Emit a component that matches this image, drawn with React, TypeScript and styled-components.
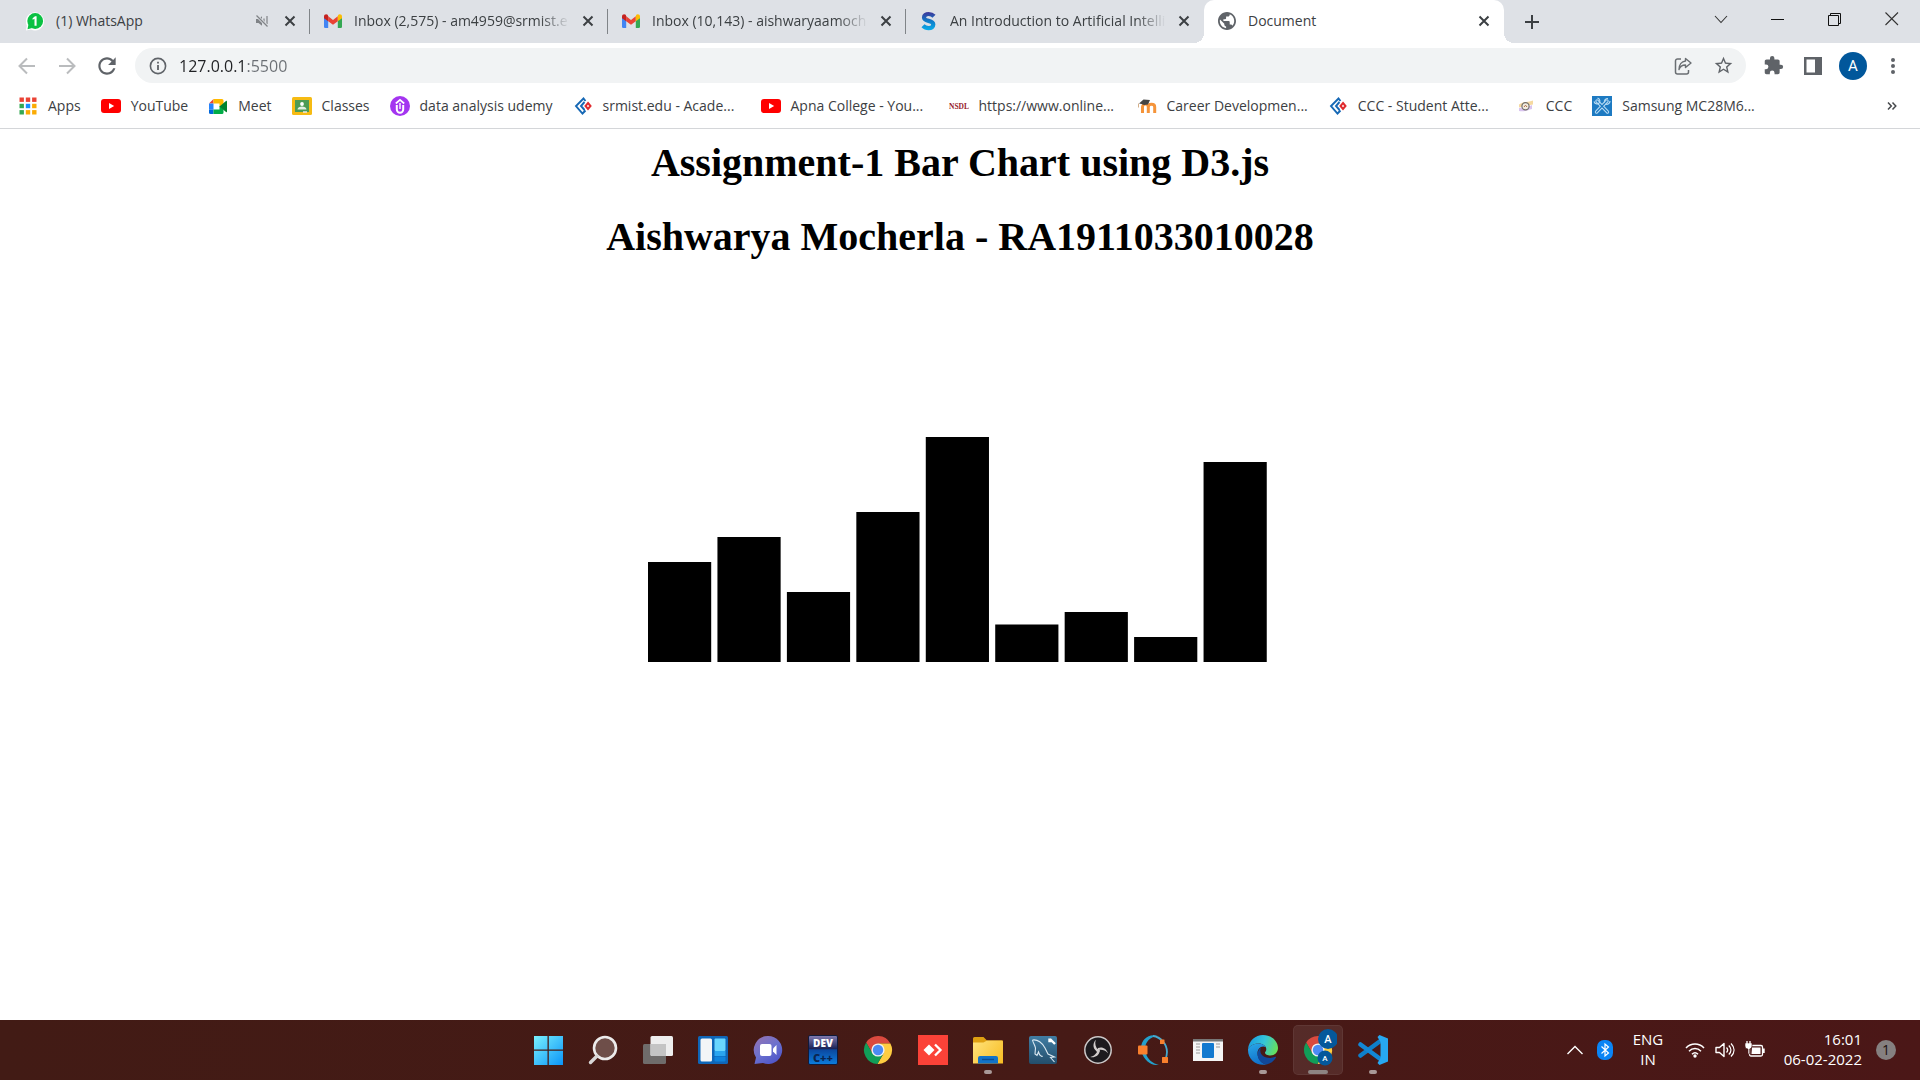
import React from "react";
import styled, { createGlobalStyle, css } from "styled-components";

const ui = `"Open Sans", "Noto Sans", sans-serif`;

const GlobalStyle = createGlobalStyle`
  *, *::before, *::after { box-sizing: border-box; }
  html, body { margin: 0; padding: 0; background: #fff; }
  button { border: 0; padding: 0; background: none; font: inherit; color: inherit; cursor: pointer; }
  a { color: inherit; text-decoration: none; }
  svg { display: block; flex: none; }
`;

const Screen = styled.div`
  display: flex;
  flex-direction: column;
  min-height: 100vh;
  font-family: ${ui};
  font-size: 14px;
  color: #3c4043;
`;

/* ---------- tab strip ---------- */
const TabStrip = styled.header`
  display: flex;
  align-items: stretch;
  height: 43px;
  padding-left: 12px;
  background: #dee1e6;
`;

const Tab = styled.div<{ $active?: boolean; $divider?: boolean }>`
  position: relative;
  display: flex;
  align-items: center;
  gap: 12px;
  flex: 0 1 ${(p) => (p.$active ? 300 : 298)}px;
  min-width: 0;
  padding: 0 14px 2px;
  ${(p) =>
    p.$divider &&
    css`
      &::after {
        content: "";
        position: absolute;
        right: 0;
        top: 9px;
        width: 1px;
        height: 25px;
        background: #808488;
      }
    `}
  ${(p) =>
    p.$active &&
    css`
      background: #fff;
      border-radius: 10px 10px 0 0;
      &::before,
      &::after {
        content: "";
        position: absolute;
        bottom: 0;
        width: 10px;
        height: 10px;
      }
      &::before {
        left: -10px;
        background: radial-gradient(circle at 0 0, transparent 10px, #fff 10px);
      }
      &::after {
        right: -10px;
        background: radial-gradient(circle at 100% 0, transparent 10px, #fff 10px);
      }
    `}
`;

const TabTitle = styled.span<{ $fade?: boolean }>`
  flex: 1;
  min-width: 0;
  overflow: hidden;
  white-space: nowrap;
  line-height: 20px;
  ${(p) =>
    p.$fade &&
    css`
      mask-image: linear-gradient(to right, #000 calc(100% - 30px), transparent);
    `}
`;

const MutedMark = styled.span`
  margin-right: 4px;
`;

const IconButton = styled.button<{ $w?: number; $h?: number }>`
  display: flex;
  flex: none;
  align-items: center;
  justify-content: center;
  width: ${(p) => p.$w ?? 12}px;
  height: ${(p) => p.$h ?? 20}px;
`;

const NewTab = styled(IconButton)`
  align-self: center;
  margin-left: 14px;
`;

const WindowControls = styled.div`
  display: flex;
  margin-left: auto;
`;

/* ---------- toolbar ---------- */
const Toolbar = styled.nav`
  display: flex;
  align-items: center;
  height: 45px;
  padding: 0 7px;
`;

const AddressBar = styled.form`
  display: flex;
  flex: 1;
  align-items: center;
  height: 35px;
  margin: 0 7px 0 8px;
  padding: 0 3px 0 14px;
  border-radius: 18px;
  background: #f1f3f4;
`;

const AddressInput = styled.input`
  flex: 1;
  min-width: 0;
  margin-left: 12px;
  padding: 0;
  border: 0;
  outline: 0;
  font: 16px/24px ${ui};
  color: transparent;
  background: linear-gradient(to right, #202124 68px, #6b6f74 68px);
  background-clip: text;
  -webkit-background-clip: text;
`;

const Avatar = styled.span`
  display: grid;
  place-items: center;
  width: 28px;
  height: 28px;
  border-radius: 50%;
  background: #01579b;
  color: #fff;
  font: 15px/20px Roboto, sans-serif;
`;

/* ---------- bookmarks ---------- */
const BookmarkBar = styled.nav`
  display: flex;
  align-items: center;
  gap: 20px;
  height: 41px;
  padding: 0 18px 4px;
  border-bottom: 1px solid #d4d6d9;
`;

const Bookmark = styled.a<{ $long?: boolean }>`
  display: flex;
  align-items: center;
  gap: 10px;
  min-width: ${(p) => (p.$long ? 168 : 0)}px;
  line-height: 20px;
  white-space: nowrap;
`;

const Overflow = styled(IconButton)`
  margin-left: auto;
`;

/* ---------- page ---------- */
const Page = styled.main`
  flex: 1;
  padding: 10px;
  text-align: center;
  color: #000;
`;

const Heading = styled.h1`
  margin: 0 0 26px;
  font: bold 40px/48px "Liberation Serif", "Times New Roman", serif;
`;

const Chart = styled.svg`
  margin: 0 auto;
`;

/* ---------- taskbar ---------- */
const Taskbar = styled.footer`
  display: grid;
  grid-template-columns: 1fr auto 1fr;
  align-items: center;
  height: 60px;
  background: linear-gradient(to right, #421b15, #461a16 55%, #4b1717);
  color: #fff;
`;

const Apps = styled.div`
  display: flex;
  grid-column: 2;
  gap: 5px;
`;

const AppButton = styled.button<{ $state?: "open" | "active" }>`
  position: relative;
  display: grid;
  place-items: center;
  width: 50px;
  height: 50px;
  border-radius: 5px;
  ${(p) =>
    p.$state === "active" &&
    css`
      background: rgba(255, 255, 255, 0.08);
      box-shadow: inset 0 0 0 1px rgba(255, 255, 255, 0.06);
    `}
  ${(p) =>
    p.$state &&
    css`
      &::after {
        content: "";
        position: absolute;
        left: 50%;
        bottom: 1px;
        width: ${p.$state === "active" ? 20 : 8}px;
        height: 4px;
        border-radius: 2px;
        background: ${p.$state === "active" ? "#8d8482" : "#a99998"};
        transform: translateX(-50%);
      }
    `}
`;

const Tray = styled.div`
  display: flex;
  align-items: center;
  justify-content: flex-end;
  padding-right: 24px;
`;

const TrayText = styled.button`
  padding: 0 12px 2px;
  font-size: 15px;
  line-height: 20px;
  text-align: center;
`;

const Language = styled(TrayText)`
  width: 56px;
`;

const Clock = styled(TrayText)`
  width: 108px;
  padding-right: 14px;
  text-align: right;
  white-space: nowrap;
`;

const QuickSettings = styled.button`
  display: flex;
  align-items: center;
  gap: 10px;
  padding: 0 3px 0 9px;
`;

const Count = styled.button`
  width: 20px;
  height: 20px;
  border-radius: 50%;
  background: #858080;
  color: #1c1010;
  font-size: 14px;
  line-height: 20px;
`;

/* ---------- drawings ---------- */
type BoxProps = { s?: number; w?: number; h?: number; vb?: string; children: React.ReactNode };
const Svg = ({ s = 20, w, h, vb = "0 0 24 24", children }: BoxProps) => (
  <svg width={w ?? s} height={h ?? s} viewBox={vb} fill="none" aria-hidden="true">
    {children}
  </svg>
);

const CloseIcon = () => (
  <Svg s={12} vb="0 0 12 12">
    <path d="M1.5 1.5l9 9M10.5 1.5l-9 9" stroke="#3c4043" strokeWidth="2" />
  </Svg>
);

const WhatsAppIcon = () => (
  <Svg w={18} h={20} vb="1 0 18 20">
    <path d="M1 19.5l.8-5A9.1 9.1 0 1 1 6 18.6z" fill="#fff" />
    <circle cx="10.2" cy="10" r="7.900" fill="#0ac143" />
    <path d="M2.500 18.300l1-5 3.800 3.700z" fill="#0ac143" />
    <path d="M7.600 7.200l2.400-2h1.600v9.600H9.500V7.700l-1.900 1z" fill="#fff" />
  </Svg>
);

const GmailIcon = () => (
  <Svg w={18} h={20} vb="0 0 18 20">
    <path d="M0 5.500l4.200 3V17H1.300A1.300 1.300 0 0 1 0 15.700z" fill="#4285f4" />
    <path d="M18 5.500l-4.200 3V17h2.900a1.300 1.300 0 0 0 1.300-1.300z" fill="#34a853" />
    <path d="M4.200 5.200L9 8.900l4.800-3.700v5L9 13.800l-4.800-3.600z" fill="#ea4335" />
    <path d="M0 5.500C0 3.200 2.300 2.600 3.700 3.700l.5 1.500v5L0 7.200z" fill="#c5221f" />
    <path d="M18 5.500c0-2.300-2.300-2.900-3.700-1.800l-.5 1.500v5l4.200-3z" fill="#fbbc04" />
  </Svg>
);

const SIcon = () => (
  <Svg w={18} h={20} vb="0 0 18 20">
    <defs>
      <linearGradient id="sg" x1="0" y1="0" x2="0" y2="20" gradientUnits="userSpaceOnUse">
        <stop offset="0.1" stopColor="#3b3c9d" />
        <stop offset="0.5" stopColor="#0f7cc9" />
        <stop offset="1" stopColor="#08b0ec" />
      </linearGradient>
    </defs>
    <path
      d="M14 5.200C12.600 3.700 10.500 3 8.600 3 5.900 3 4 4.400 4 6.400c0 4.700 9.300 2.300 9.300 7.200 0 2.200-1.900 3.600-4.700 3.600-2.200 0-4.100-.8-5.600-2.400"
      stroke="url(#sg)"
      strokeWidth="4.200"
    />
  </Svg>
);

const GlobeIcon = () => (
  <Svg s={18} vb="2 2 20 20">
    <path
      fill="#5f6368"
      d="M12 2C6.480 2 2 6.480 2 12s4.480 10 10 10 10-4.480 10-10S17.520 2 12 2zm-1 17.930c-3.950-.49-7-3.850-7-7.930 0-.62.080-1.210.210-1.790L9 15v1c0 1.100.9 2 2 2v1.930zm6.900-2.540c-.26-.81-1-1.390-1.900-1.390h-1v-3c0-.55-.45-1-1-1H8v-2h2c.55 0 1-.45 1-1V7h2c1.100 0 2-.9 2-2v-.41c2.930 1.190 5 4.060 5 7.410 0 2.080-.8 3.970-2.100 5.390z"
    />
  </Svg>
);

const MuteIcon = () => (
  <Svg s={12} vb="0 0 12 12">
    <path d="M0 4h2.500L6 1.200v9.600L2.500 8H0z" fill="#808387" />
    <path d="M8 3.500v5M11 1v8" stroke="#808387" strokeWidth="1.200" />
    <path d="M0 0l12 12" stroke="#dee1e6" strokeWidth="3" />
    <path d="M0.500 0.500l11 11" stroke="#808387" strokeWidth="1.200" />
  </Svg>
);

const YouTubeIcon = () => (
  <Svg vb="0 0 20 20">
    <rect y="3" width="20" height="14" rx="3" fill="#f00" />
    <path d="M8 7v6l5.200-3z" fill="#fff" />
  </Svg>
);

const AppsIcon = () => (
  <Svg vb="0 0 20 20">
    {["#ea4335", "#ea4335", "#ea4335", "#34a853", "#1a90ff", "#fbab04", "#34a853", "#fbab04", "#fbab04"].map((c, i) => (
      <rect key={i} x={1.5 + (i % 3) * 6.3} y={1.5 + Math.floor(i / 3) * 6.3} width="4.400" height="4.400" fill={c} />
    ))}
  </Svg>
);

const MeetIcon = () => (
  <Svg vb="0 0 20 20">
    <path d="M5.500 3v4.500H1z" fill="#ea4335" />
    <path d="M1 7.500h4.500v6H1z" fill="#2684fc" />
    <path d="M1 13.500h4.500V18H2.500A1.500 1.500 0 0 1 1 16.500z" fill="#0066da" />
    <path d="M5.500 3H14a1.500 1.500 0 0 1 1.500 1.500V8l-4 3V7.500h-6z" fill="#ffba00" />
    <path d="M5.500 13.500h6V10l4 3v3.500A1.500 1.500 0 0 1 14 18H5.500z" fill="#00ac47" />
    <path d="M11.500 10.500L18 5c.5-.4 1-.1 1 .5v10c0 .6-.5.900-1 .5z" fill="#00832d" />
  </Svg>
);

const ClassesIcon = () => (
  <Svg vb="0 0 20 20">
    <rect y="1" width="20" height="18" rx="1.500" fill="#f6bb13" />
    <rect x="3" y="4" width="14" height="12" fill="#4d9b55" />
    <circle cx="10" cy="8" r="1.900" fill="#fff" />
    <path d="M5.500 13.500c0-2 2.300-3 4.500-3s4.500 1 4.500 3z" fill="#e3f0e4" />
    <path d="M11 16h4" stroke="#e8e8e8" strokeWidth="1.500" />
  </Svg>
);

const UdemyIcon = () => (
  <Svg vb="0 0 20 20">
    <circle cx="10" cy="10" r="10" fill="#a435f0" />
    <path d="M5.800 7.500L10 3.800l4.200 3.700" stroke="#fff" strokeWidth="1.700" />
    <path d="M6.800 9v4.500a3.200 3.200 0 0 0 6.400 0V9" stroke="#fff" strokeWidth="2" />
    <path d="M10 7v6" stroke="#fff" strokeWidth="1.400" />
  </Svg>
);

const CodeIcon = () => (
  <Svg vb="0 0 20 20">
    <path d="M12.500 5L10.500 2.500 3 10l6.500 7.500 3-3M11.500 6L8 10l3.500 4" stroke="#1668b5" strokeWidth="1.900" />
    <path d="M15 7l2.500 3-2.500 3-2.500-3z" stroke="#e02b2f" strokeWidth="2" />
  </Svg>
);

const NsdlIcon = () => (
  <Svg vb="0 0 20 20">
    <text x="10" y="13" textAnchor="middle" fontFamily="Liberation Serif, serif" fontWeight="bold" fontSize="7.500" fill="#97212c">
      NSDL
    </text>
  </Svg>
);

const MoodleIcon = () => (
  <Svg vb="0 0 20 20">
    <path d="M5.500 17v-6a2.800 2.800 0 0 1 5.800 0v6M11.300 17v-6c0-3.600 6.400-3.600 6.400 0v6" stroke="#f5943a" strokeWidth="3" />
    <path d="M2 7.500L6.500 3.500l6.500.5-2 4.500-4 .5-2.500-1z" fill="#454545" />
    <path d="M1.500 7.500v4" stroke="#c99a6b" strokeWidth="0.800" />
  </Svg>
);

const RibbonIcon = () => (
  <Svg vb="0 0 20 20">
    <path d="M3 8.500c4-3 8-2 14-4v4c-5 1-9 1-14 3z" fill="#f6d9a0" />
    <path d="M3 12c4-1 8 0 13-3v4c-4 1-8 3-13 2z" fill="#d9c4ef" />
    <circle cx="9.500" cy="10.300" r="3.600" fill="#f3eee0" stroke="#74706b" strokeWidth="1.200" />
    <path d="M8 11l1.500-1.800L11 11" stroke="#b26d4a" strokeWidth="1" />
  </Svg>
);

const ToolsIcon = () => (
  <Svg vb="0 0 20 20">
    <rect width="20" height="20" fill="#1d7ac2" />
    <path d="M5 5l10.500 11M15 5L4.500 16" stroke="#b8dcf4" strokeWidth="3.400" strokeLinecap="round" />
    <path d="M5 5l10.500 11M15 5L4.500 16" stroke="#1d7ac2" strokeWidth="1.300" strokeLinecap="round" />
    <path d="M2 5.500c1 3 4.500 3 5 1.500M5.500 2c2.500 1 3 3.500 1.500 5M12.500 6.500c-.5-2 1-4 3.500-4M18 5c0 2.500-2.500 4-4.500 3" stroke="#b8dcf4" strokeWidth="1.200" />
  </Svg>
);

/* taskbar drawings share a 30 unit box */
const T = ({ children }: { children: React.ReactNode }) => (
  <Svg s={30} vb="0 0 30 30">
    {children}
  </Svg>
);

const StartIcon = () => (
  <T>
    <defs>
      <linearGradient id="win" x1="0" y1="0" x2="30" y2="30" gradientUnits="userSpaceOnUse">
        <stop stopColor="#7df4fe" />
        <stop offset="1" stopColor="#0a94f8" />
      </linearGradient>
    </defs>
    <path d="M1 1h13.500v13.500H1zM15.800 1H30v13.500H15.800zM1 15.800h13.500V30H1zM15.800 15.800H30V30H15.800z" fill="url(#win)" />
  </T>
);

const SearchIcon = () => (
  <T>
    <circle cx="17" cy="13" r="11" fill="#6e4e49" stroke="#ecebeb" strokeWidth="2.600" />
    <path d="M9 21l-6.500 6.500" stroke="#d8d6d6" strokeWidth="3.400" strokeLinecap="round" />
  </T>
);

const TaskViewIcon = () => (
  <T>
    <rect y="9" width="23" height="20" rx="1.500" fill="#6f6c6b" />
    <rect x="7.500" y="1" width="22.500" height="20" rx="1.500" fill="#eee" />
    <path d="M7.500 9H23v12H9a1.500 1.500 0 0 1-1.500-1.500z" fill="#c4c4c4" />
  </T>
);

const WidgetsIcon = () => (
  <T>
    <rect y="1" width="30" height="28" rx="1.500" fill="#0f66b8" />
    <rect x="2.500" y="3.500" width="11.500" height="23" rx="1.500" fill="#f3f5f7" />
    <rect x="16.500" y="3.500" width="11" height="12.500" rx="1" fill="#69d6ff" />
    <rect x="16.500" y="16" width="11" height="5" fill="#2aa5f0" />
    <rect x="16.500" y="21.500" width="11" height="5" rx="1" fill="#0f83dd" />
  </T>
);

const ChatIcon = () => (
  <T>
    <defs>
      <linearGradient id="chat" x1="6" y1="4" x2="22" y2="28" gradientUnits="userSpaceOnUse">
        <stop stopColor="#8b72b8" />
        <stop offset="0.5" stopColor="#6a70cf" />
        <stop offset="1" stopColor="#4f55c8" />
      </linearGradient>
    </defs>
    <path d="M15 1a14 14 0 1 1-5 27l-8.500 1 1.500-6.500A14 14 0 0 1 15 1z" fill="url(#chat)" />
    <rect x="7" y="9" width="11.500" height="12" rx="2" fill="#fff" />
    <path d="M20 13.500l3.500-3.500v10L20 16.500z" fill="#fff" />
  </T>
);

const DevIcon = () => (
  <T>
    <defs>
      <linearGradient id="dev" x1="0" y1="0" x2="0" y2="30" gradientUnits="userSpaceOnUse">
        <stop stopColor="#8780b5" />
        <stop offset="0.450" stopColor="#1c2458" />
        <stop offset="0.500" stopColor="#0b49a0" />
        <stop offset="1" stopColor="#0c7fe0" />
      </linearGradient>
    </defs>
    <rect x="0.500" y="0.500" width="29" height="29" rx="1.500" fill="url(#dev)" stroke="#101a3a" />
    <text x="15" y="12" textAnchor="middle" fontFamily="Open Sans, sans-serif" fontWeight="800" fontSize="10" fill="#fff">
      DEV
    </text>
    <text x="15" y="27" textAnchor="middle" fontFamily="Open Sans, sans-serif" fontWeight="800" fontSize="11" fill="#0a2550">
      C++
    </text>
  </T>
);

const ChromeArt = () => (
  <>
    <path d="M3.170 7.510A14 14 0 0 1 27.400 8.500H15L9.370 18.250z" fill="#db4a3f" />
    <path d="M27.400 8.500A14 14 0 0 1 14.430 29l6.200-10.750L15 8.500z" fill="#ffcd41" />
    <path d="M14.430 29A14 14 0 0 1 3.170 7.510l6.200 10.740h11.260z" fill="#119d58" />
    <circle cx="15" cy="15" r="6.600" fill="#f1f1f1" />
    <circle cx="15" cy="15" r="5.200" fill="#4b8bf5" />
  </>
);

const ChromeIcon = () => (
  <T>
    <ChromeArt />
  </T>
);

const AnyDeskIcon = () => (
  <T>
    <rect width="30" height="30" fill="#fb4238" />
    <path d="M5.500 15l5.500-5.500 5.500 5.500-5.500 5.500z" fill="#fff" />
    <path d="M14.500 10l5 5-5 5M18.500 10l5 5-5 5" stroke="#fb4238" strokeWidth="1.500" />
    <path d="M17 9.500l5.500 5.500-5.500 5.500" stroke="#fff" strokeWidth="2.300" />
  </T>
);

const FolderIcon = () => (
  <T>
    <defs>
      <linearGradient id="fold" x1="0" y1="6" x2="30" y2="28" gradientUnits="userSpaceOnUse">
        <stop stopColor="#ffe37c" />
        <stop offset="1" stopColor="#f8bd23" />
      </linearGradient>
    </defs>
    <path d="M0 3.500A1.500 1.500 0 0 1 1.500 2h9L14 5.500H30V14H0z" fill="#dfa012" />
    <path d="M0 7.500h10.500L14 5.500h14.500A1.500 1.500 0 0 1 30 7v21.500H0z" fill="url(#fold)" />
    <path d="M5 28.500V23a2 2 0 0 1 2-2h16a2 2 0 0 1 2 2v5.500z" fill="#1273c8" />
    <path d="M9 24.500h12" stroke="#0b4d93" strokeWidth="1.400" />
  </T>
);

const MySqlIcon = () => (
  <T>
    <defs>
      <linearGradient id="sql" x1="0" y1="0" x2="0" y2="30" gradientUnits="userSpaceOnUse">
        <stop stopColor="#427fa6" />
        <stop offset="1" stopColor="#224c69" />
      </linearGradient>
    </defs>
    <rect x="1" y="1" width="28" height="28" rx="2" fill="url(#sql)" />
    <path
      d="M4.500 5c5-1 10 3 12.500 8l3 6 6.500 3-4 .5 4 4.500M4.500 5c.5 3 2.500 5 3 8l-.5 6 2 1.500 1.500-3.500c1 3.500 3 5 4 4"
      stroke="#dbe9f2"
      strokeWidth="1.100"
    />
    <path d="M22 4l5 5M21.500 3.500v2.500h2.500" stroke="#fff" strokeWidth="2.400" />
  </T>
);

const ObsIcon = () => (
  <T>
    <circle cx="15" cy="15" r="13.200" fill="#1c1a1e" stroke="#ccc8c8" strokeWidth="1.500" />
    {[0, 120, 240].map((a) => (
      <path key={a} transform={`rotate(${a} 15 15)`} d="M15.500 15.500C12.500 12 11.500 9 12.800 4.800c-3 3.200-3.300 8.200.500 11.200z" fill="#d0cccc" />
    ))}
    <circle cx="15" cy="15.500" r="1.800" fill="#d0cccc" />
  </T>
);

const OctaveIcon = () => (
  <T>
    <path
      d="M20 1C10-2.500 1 6 3.500 16.500 6 26 14 31.500 21 29.500c-6-.5-11.500-5-13.500-12C5.500 9 11 1.500 20 1z"
      fill="#24a0cc"
    />
    <path d="M15 1c8 1 14 8.500 14 16 0 3-.7 5.500-2 8" stroke="#45a9cf" strokeWidth="1.800" />
    <rect y="10.500" width="9.500" height="9" rx="1" fill="#f9802d" />
    <rect x="22" y="4.500" width="4.500" height="4.500" rx="0.500" fill="#f9802d" />
    <rect x="24" y="22" width="6" height="6" rx="0.500" fill="#f9802d" />
  </T>
);

const WindowIcon = () => (
  <T>
    <rect y="4" width="30" height="22" fill="#f5f5f5" />
    <rect y="4" width="30" height="2.500" fill="#777" />
    <rect x="9" y="8" width="12" height="15" rx="1" fill="#1379cf" />
    <path d="M3 9h4M3 12h4M3 15h4M3 18h4M23 9h4M23 12h4" stroke="#9a9a9a" strokeWidth="1" />
  </T>
);

const EdgeIcon = () => (
  <T>
    <defs>
      <linearGradient id="e1" x1="2" y1="4" x2="29" y2="14" gradientUnits="userSpaceOnUse">
        <stop stopColor="#1ba0e2" />
        <stop offset="0.500" stopColor="#35c5d8" />
        <stop offset="1" stopColor="#67e05a" />
      </linearGradient>
      <linearGradient id="e2" x1="2" y1="8" x2="10" y2="30" gradientUnits="userSpaceOnUse">
        <stop stopColor="#2aa7e8" />
        <stop offset="1" stopColor="#0f6fc9" />
      </linearGradient>
    </defs>
    <path d="M0 14C1 5.500 7.500 0 15 0c9 0 15 6.500 15 13 0 4.500-3.500 7.500-7.500 7.500-3 0-5.500-1.300-5.500-2.700 0-.9 1.300-1.600 1.300-3.500C18.300 11 15 8.500 10.500 8.500 5.500 8.500 1.500 11 0 14z" fill="url(#e1)" />
    <path d="M0 14c1.500-3 5.500-5.500 10.500-5.500 3.500 0 6 1.500 7.200 3.500C13 10 9.500 14 9.500 18c0 6 4.500 11 9 11.500C9 31.500 0 25 0 15z" fill="url(#e2)" />
    <path d="M13 12.800c-2 1.500-3.500 3.700-3.500 6.200 0 5 4 10 9 10.500 4-.8 7.500-3.500 9.500-7 .3-.6-.2-1-.8-.7-5.500 2.700-14.500.7-14.900-5.800-.1-1.200.200-2.300.7-3.200z" fill="#11489a" />
  </T>
);

const ChromeProfileIcon = () => (
  <Svg w={38} h={42} vb="0 0 38 42">
    <g transform="translate(4 6)">
      <ChromeArt />
    </g>
    <circle cx="29" cy="10" r="10" fill="#04589b" />
    <circle cx="26" cy="29" r="7.500" fill="#04589b" />
    <text x="29" y="14" textAnchor="middle" fontFamily="Roboto, sans-serif" fontSize="11" fontWeight="500" fill="#fff">
      A
    </text>
    <text x="26" y="32" textAnchor="middle" fontFamily="Roboto, sans-serif" fontSize="8" fontWeight="500" fill="#fff">
      A
    </text>
  </Svg>
);

const VsCodeIcon = () => (
  <T>
    <path d="M23 5.500L2.500 20.500" stroke="#0f7fc9" strokeWidth="4.500" strokeLinecap="round" />
    <path d="M23 24.500L2.500 9.500" stroke="#1287d6" strokeWidth="4.500" strokeLinecap="round" />
    <path d="M21.500 0L30 3.500v23L21.500 30l-2-2 3-5V7l-3-5z" fill="#27a8f2" />
  </T>
);

const WifiIcon = () => (
  <Svg vb="0 0 20 20">
    <path d="M1 8c5-5.300 13-5.300 18 0M4 11.200c3.500-3.600 8.500-3.600 12 0M7 14.200c2-2 4-2 6 0" stroke="#fff" strokeWidth="1.500" />
    <circle cx="10" cy="16" r="1.700" fill="#fff" />
  </Svg>
);

const VolumeIcon = () => (
  <Svg vb="0 0 20 20">
    <path d="M1 7.500h3.500L9 3.500v13l-4.500-4H1z" stroke="#fff" strokeWidth="1.400" strokeLinejoin="round" />
    <path d="M11.500 7.500c1.500 1.600 1.500 3.400 0 5M13.800 5.500c2.800 2.800 2.800 6.200 0 9M16 3.500c4 4 4 9 0 13" stroke="#fff" strokeWidth="1.300" />
  </Svg>
);

const BatteryIcon = () => (
  <Svg vb="0 0 20 20">
    <rect x="4.500" y="5.500" width="13" height="10.500" rx="1.500" stroke="#fff" strokeWidth="1.300" />
    <path d="M7 7.500h8.500V14H6.500z" fill="#fff" />
    <path d="M18.800 8.500v4.500" stroke="#fff" strokeWidth="1.800" />
    <path d="M0 3h7v3a3 3 0 0 1-2.500 3v5H3V9A3 3 0 0 1 0 6z" fill="#fff" stroke="#491818" strokeWidth="0.600" />
    <path d="M2 1v3M5 1v3" stroke="#fff" strokeWidth="1.300" />
  </Svg>
);

const BluetoothIcon = () => (
  <Svg w={16} h={20} vb="0 0 16 20">
    <rect width="16" height="20" rx="7" fill="#0a84f5" />
    <path d="M4.500 6.500l7 6.500L8 16V4l3.500 3-7 6.500" stroke="#fff" strokeWidth="1.200" />
  </Svg>
);

/* ---------- data ---------- */
const tabs = [
  { title: "(1) WhatsApp", icon: <WhatsAppIcon />, muted: true, divider: true },
  { title: "Inbox (2,575) - am4959@srmist.e", icon: <GmailIcon />, fade: true, divider: true },
  { title: "Inbox (10,143) - aishwaryaamoch", icon: <GmailIcon />, fade: true, divider: true },
  { title: "An Introduction to Artificial Intelli", icon: <SIcon />, fade: true },
  { title: "Document", icon: <GlobeIcon />, active: true },
];

const bookmarks = [
  { label: "Apps", icon: <AppsIcon /> },
  { label: "YouTube", icon: <YouTubeIcon /> },
  { label: "Meet", icon: <MeetIcon /> },
  { label: "Classes", icon: <ClassesIcon /> },
  { label: "data analysis udemy", icon: <UdemyIcon /> },
  { label: "srmist.edu - Acade...", icon: <CodeIcon />, long: true },
  { label: "Apna College - You...", icon: <YouTubeIcon />, long: true },
  { label: "https://www.online...", icon: <NsdlIcon />, long: true },
  { label: "Career Developmen...", icon: <MoodleIcon />, long: true },
  { label: "CCC - Student Atte...", icon: <CodeIcon />, long: true },
  { label: "CCC", icon: <RibbonIcon /> },
  { label: "Samsung MC28M6...", icon: <ToolsIcon />, long: true },
];

const taskApps: { name: string; icon: React.ReactNode; state?: "open" | "active" }[] = [
  { name: "Start", icon: <StartIcon /> },
  { name: "Search", icon: <SearchIcon /> },
  { name: "Task View", icon: <TaskViewIcon /> },
  { name: "Widgets", icon: <WidgetsIcon /> },
  { name: "Chat", icon: <ChatIcon /> },
  { name: "Dev-C++", icon: <DevIcon /> },
  { name: "Chrome", icon: <ChromeIcon /> },
  { name: "AnyDesk", icon: <AnyDeskIcon /> },
  { name: "File Explorer", icon: <FolderIcon />, state: "open" },
  { name: "MySQL Workbench", icon: <MySqlIcon /> },
  { name: "OBS Studio", icon: <ObsIcon /> },
  { name: "Octave", icon: <OctaveIcon /> },
  { name: "Window", icon: <WindowIcon /> },
  { name: "Edge", icon: <EdgeIcon />, state: "open" },
  { name: "Chrome profile", icon: <ChromeProfileIcon />, state: "active" },
  { name: "Visual Studio Code", icon: <VsCodeIcon />, state: "open" },
];

const dataset = [80, 100, 56, 120, 180, 30, 40, 20, 160];
const chartWidth = 500;
const chartHeight = 300;
const barPadding = 5;
const barWidth = chartWidth / dataset.length;

export default function App() {
  return (
    <Screen>
      <GlobalStyle />
      <TabStrip>
        {tabs.map((t) => (
          <Tab key={t.title} $active={t.active} $divider={t.divider}>
            {t.icon}
            <TabTitle $fade={t.fade}>{t.title}</TabTitle>
            {t.muted && (
              <MutedMark>
                <MuteIcon />
              </MutedMark>
            )}
            <IconButton aria-label="Close tab">
              <CloseIcon />
            </IconButton>
          </Tab>
        ))}
        <NewTab $w={28} $h={28} aria-label="New tab">
          <Svg s={16} vb="0 0 16 16">
            <path d="M8 1v14M1 8h14" stroke="#3c4043" strokeWidth="2" />
          </Svg>
        </NewTab>
        <WindowControls>
          <IconButton $w={57} $h={37} aria-label="Search tabs">
            <Svg s={14} vb="0 0 14 14">
              <path d="M1 4l6 6.500L13 4" stroke="#333" strokeWidth="1.100" />
            </Svg>
          </IconButton>
          <IconButton $w={57} $h={37} aria-label="Minimize">
            <Svg s={14} vb="0 0 14 14">
              <path d="M0 7.500h13" stroke="#111" />
            </Svg>
          </IconButton>
          <IconButton $w={57} $h={37} aria-label="Restore">
            <Svg s={14} vb="0 0 14 14">
              <path d="M0.500 3.500h10v10h-10zM2.500 3.500v-2h10v10h-2" stroke="#111" />
            </Svg>
          </IconButton>
          <IconButton $w={57} $h={37} aria-label="Close">
            <Svg s={14} vb="0 0 14 14">
              <path d="M0.500 0.500l12.500 12.500M13 0.500L0.500 13" stroke="#333" strokeWidth="1.100" />
            </Svg>
          </IconButton>
        </WindowControls>
      </TabStrip>

      <Toolbar>
        <IconButton $w={40} $h={40} aria-label="Back">
          <Svg s={18} vb="0 0 18 18">
            <path d="M17 9H2M9 1.500L1.500 9 9 16.500" stroke="#babcbe" strokeWidth="2" />
          </Svg>
        </IconButton>
        <IconButton $w={40} $h={40} aria-label="Forward">
          <Svg s={18} vb="0 0 18 18">
            <path d="M1 9h15M9 1.500L16.500 9 9 16.500" stroke="#babcbe" strokeWidth="2" />
          </Svg>
        </IconButton>
        <IconButton $w={40} $h={40} aria-label="Reload">
          <Svg s={26}>
            <path
              fill="#5f6368"
              d="M17.650 6.350C16.200 4.900 14.210 4 12 4c-4.420 0-7.990 3.580-7.990 8s3.570 8 7.990 8c3.730 0 6.840-2.550 7.730-6h-2.080c-.82 2.330-3.040 4-5.650 4-3.310 0-6-2.690-6-6s2.690-6 6-6c1.660 0 3.140.69 4.220 1.780L13 11h7V4l-2.350 2.350z"
            />
          </Svg>
        </IconButton>
        <AddressBar>
          <Svg s={18} vb="0 0 18 18">
            <circle cx="9" cy="9" r="7.600" stroke="#5f6368" strokeWidth="1.600" />
            <path d="M9 8v5M9 4.800v1.700" stroke="#5f6368" strokeWidth="1.800" />
          </Svg>
          <AddressInput aria-label="Address" defaultValue="127.0.0.1:5500" />
          <IconButton type="button" $w={40} $h={30} aria-label="Share">
            <Svg s={18} vb="0 0 18 18">
              <path d="M7 2H3.500A2 2 0 0 0 1.500 4v11a2 2 0 0 0 2 2h9a2 2 0 0 0 2-2v-2" stroke="#6a6e72" strokeWidth="1.500" />
              <path d="M11.500 1.500L17 6l-5.500 4.500V8C8 8 6 9.500 5 12.500 5 8 7.500 4.500 11.500 4z" stroke="#6a6e72" strokeWidth="1.400" strokeLinejoin="round" />
            </Svg>
          </IconButton>
          <IconButton type="button" $w={40} $h={30} aria-label="Bookmark">
            <Svg s={21}>
              <path
                fill="#5f6368"
                d="M22 9.240l-7.190-.62L12 2 9.190 8.630 2 9.240l5.460 4.730L5.820 21 12 17.270 18.180 21l-1.630-7.030L22 9.240zM12 15.400l-3.760 2.270 1-4.280-3.320-2.880 4.380-.38L12 6.100l1.710 4.040 4.380.38-3.320 2.880 1 4.280L12 15.400z"
              />
            </Svg>
          </IconButton>
        </AddressBar>
        <IconButton $w={40} $h={40} aria-label="Extensions">
          <Svg s={21}>
            <path
              fill="#5f6368"
              d="M20.500 11H19V7c0-1.100-.9-2-2-2h-4V3.500a2.500 2.500 0 0 0-5 0V5H4c-1.100 0-2 .9-2 2v3.800h1.500a2.700 2.700 0 0 1 0 5.400H2V20c0 1.100.9 2 2 2h3.800v-1.500a2.700 2.700 0 0 1 5.400 0V22H17c1.100 0 2-.9 2-2v-4h1.500a2.500 2.500 0 0 0 0-5z"
            />
          </Svg>
        </IconButton>
        <IconButton $w={40} $h={40} aria-label="Side panel">
          <Svg s={18} vb="0 0 18 18">
            <path d="M0 0h18v18H0zM2.500 2.500v13h8.500v-13z" fill="#5f6368" fillRule="evenodd" />
          </Svg>
        </IconButton>
        <IconButton $w={40} $h={40} aria-label="Profile">
          <Avatar>A</Avatar>
        </IconButton>
        <IconButton $w={40} $h={40} aria-label="Menu">
          <Svg s={18} vb="0 0 18 18">
            <circle cx="9" cy="3" r="2" fill="#5f6368" />
            <circle cx="9" cy="9" r="2" fill="#5f6368" />
            <circle cx="9" cy="15" r="2" fill="#5f6368" />
          </Svg>
        </IconButton>
      </Toolbar>

      <BookmarkBar>
        {bookmarks.map((b) => (
          <Bookmark key={b.label} href="#" $long={b.long}>
            {b.icon}
            {b.label}
          </Bookmark>
        ))}
        <Overflow $w={20} aria-label="More bookmarks">
          <Svg s={10} vb="0 0 10 10">
            <path d="M1 1.500L4.300 5 1 8.500M5.500 1.500L8.800 5 5.500 8.500" stroke="#46494c" strokeWidth="1.500" />
          </Svg>
        </Overflow>
      </BookmarkBar>

      <Page>
        <Heading>Assignment-1 Bar Chart using D3.js</Heading>
        <Heading>Aishwarya Mocherla - RA1911033010028</Heading>
        <Chart width={625} height={375} viewBox={`0 0 ${chartWidth} ${chartHeight}`} role="img" aria-label="Bar chart">
          {dataset.map((d, i) => (
            <rect key={i} x={i * barWidth} y={chartHeight - d} width={barWidth - barPadding} height={d} />
          ))}
        </Chart>
      </Page>

      <Taskbar>
        <Apps>
          {taskApps.map((a) => (
            <AppButton key={a.name} aria-label={a.name} $state={a.state}>
              {a.icon}
            </AppButton>
          ))}
        </Apps>
        <Tray>
          <IconButton $w={30} $h={40} aria-label="Hidden icons">
            <Svg s={16} vb="0 0 16 16">
              <path d="M0.500 12L8 4.500l7.500 7.500" stroke="#fff" strokeWidth="1.400" />
            </Svg>
          </IconButton>
          <IconButton $w={30} $h={40} aria-label="Bluetooth">
            <BluetoothIcon />
          </IconButton>
          <Language>
            ENG
            <br />
            IN
          </Language>
          <QuickSettings aria-label="Network, volume, battery">
            <WifiIcon />
            <VolumeIcon />
            <BatteryIcon />
          </QuickSettings>
          <Clock>
            16:01
            <br />
            06-02-2022
          </Clock>
          <Count>1</Count>
        </Tray>
      </Taskbar>
    </Screen>
  );
}
